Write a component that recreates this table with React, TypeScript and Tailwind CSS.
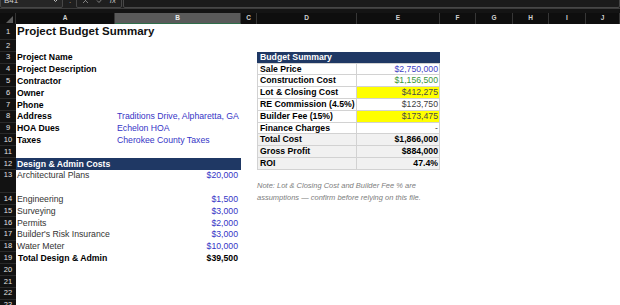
import React from "react";

const A = "w-[99px]";
const B = "w-[126px]";
const C = "w-[16px]";
const D = "w-[100px]";
const E = "w-[83px]";

const BLUE = "text-[#3535c6]";
const GRID = "border-[#d2d2d2]";

function Cell({
  w,
  className = "",
  children,
}: {
  w: string;
  className?: string;
  children?: React.ReactNode;
}) {
  return (
    <div className={`${w} shrink-0 h-full flex items-center whitespace-nowrap ${className}`}>
      {children}
    </div>
  );
}

function Row({
  n,
  h = "h-[11.8px]",
  top = false,
  children,
}: {
  n: number;
  h?: string;
  top?: boolean;
  children?: React.ReactNode;
}) {
  return (
    <div className={`flex ${h}`}>
      <div
        className={`w-[16px] shrink-0 h-full bg-[#121212] border-b border-[#2a2a2a] text-[7.5px] text-[#e2e2e2] flex justify-center ${
          top ? "items-start pt-[1px]" : "items-center"
        }`}
      >
        {n}
      </div>
      {children}
    </div>
  );
}

// two-cell row of the Budget Summary table (columns D and E)
function SumRow({
  label,
  value,
  valueClass = "text-[#404040]",
  cellBg = "",
  bold = false,
}: {
  label: string;
  value: string;
  valueClass?: string;
  cellBg?: string;
  bold?: boolean;
}) {
  return (
    <>
      <Cell w={D} className={`border-l border-r border-b ${GRID} pl-[2px] font-bold text-black ${cellBg}`}>
        {label}
      </Cell>
      <Cell
        w={E}
        className={`border-r border-b ${GRID} justify-end pr-[1px] ${bold ? "font-bold text-black" : valueClass} ${cellBg}`}
      >
        {value}
      </Cell>
    </>
  );
}

function Label({ children }: { children: React.ReactNode }) {
  return (
    <Cell w={A} className="pl-[1px] font-bold text-black">
      {children}
    </Cell>
  );
}

function CostRow({ n, label, value }: { n: number; label: string; value: string }) {
  return (
    <Row n={n}>
      <Cell w={A} className="pl-[1px] text-[#333]">
        {label}
      </Cell>
      <Cell w={B} className={`justify-end pr-[3px] ${BLUE}`}>
        {value}
      </Cell>
    </Row>
  );
}

const colHeads = [
  { l: "A", w: "w-[99px]" },
  { l: "B", w: "w-[126px]", sel: true },
  { l: "C", w: "w-[16px]" },
  { l: "D", w: "w-[100px]" },
  { l: "E", w: "w-[83px]" },
  { l: "F", w: "w-[36px]" },
  { l: "G", w: "w-[37px]" },
  { l: "H", w: "w-[36px]" },
  { l: "I", w: "w-[37px]" },
  { l: "J", w: "w-[34px]" },
];

export default function App() {
  return (
    <div className="w-[620px] h-[305px] overflow-hidden bg-white font-['Liberation_Sans',Arial,sans-serif] text-[8.7px] leading-none">
      {/* formula bar, cut at top */}
      <div className="h-[9px] overflow-hidden bg-[#1f1f1f] border-b border-[#3c3c3c]">
        <div className="flex items-center h-[15px] -mt-[7px] text-[#cfcfcf]">
          <div className="w-[63px] h-full border border-[#474747] rounded-[2px] bg-[#262626] flex items-center justify-between px-[3px] text-[8px]">
            <span>B41</span>
            <svg width="7" height="5" viewBox="0 0 7 5" fill="none">
              <path d="M1 1l2.5 2.5L6 1" stroke="#bdbdbd" strokeWidth="1" />
            </svg>
          </div>
          <span className="ml-[6px] text-[8px] text-[#aaa]">:</span>
          <div className="ml-[5px] w-[46px] h-full border border-[#474747] rounded-[2px] flex items-center justify-around px-[2px] text-[#8a8a8a]">
            <svg width="7" height="7" viewBox="0 0 7 7">
              <path d="M1 1l5 5M6 1L1 6" stroke="#8a8a8a" strokeWidth="0.9" />
            </svg>
            <svg width="8" height="7" viewBox="0 0 8 7" fill="none">
              <path d="M1 3.5l2 2L7 1" stroke="#8a8a8a" strokeWidth="0.9" />
            </svg>
            <span className="italic text-[8px] text-[#bdbdbd]">fx</span>
          </div>
          <div className="ml-[1px] flex-1 h-full border border-[#474747] rounded-[2px] bg-[#1b1b1b]" />
        </div>
      </div>
      <div className="h-[4px] bg-[#141414]" />

      {/* column headers */}
      <div className="flex h-[11px] bg-[#0e0e0e] text-[6.5px] font-bold text-[#d2d2d2]">
        <div className="w-[16px] shrink-0 h-full flex items-end justify-end pr-[2px] pb-[1px] border-r border-[#333]">
          <svg width="7" height="7" viewBox="0 0 7 7">
            <path d="M7 0L7 7L0 7Z" fill="#5e5e5e" />
          </svg>
        </div>
        {colHeads.map((c) => (
          <div
            key={c.l}
            className={`${c.w} shrink-0 h-full flex items-center justify-center border-r border-[#363636] ${
              c.sel ? "bg-[#5a5a5a] text-[#ececec] border-b border-b-[#2f6e4a]" : ""
            }`}
          >
            {c.l}
          </div>
        ))}
      </div>

      {/* sheet */}
      <Row n={1} h="h-[16px]">
        <Cell w={A} className="pl-[1px] text-[11.5px] font-bold text-[#111]">
          Project Budget Summary
        </Cell>
      </Row>
      <Row n={2} />
      <Row n={3}>
        <Label>Project Name</Label>
        <Cell w={B} />
        <Cell w={C} />
        <div className="w-[183px] shrink-0 h-full flex items-center bg-[#1f3864] pl-[3px] font-bold text-white border-b border-[#d2d2d2]">
          Budget Summary
        </div>
      </Row>
      <Row n={4}>
        <Label>Project Description</Label>
        <Cell w={B} />
        <Cell w={C} />
        <SumRow label="Sale Price" value="$2,750,000" valueClass="text-[#4040c4]" />
      </Row>
      <Row n={5}>
        <Label>Contractor</Label>
        <Cell w={B} />
        <Cell w={C} />
        <SumRow label="Construction Cost" value="$1,156,500" valueClass="text-[#3a963a]" />
      </Row>
      <Row n={6}>
        <Label>Owner</Label>
        <Cell w={B} />
        <Cell w={C} />
        <Cell w={D} className={`border-l border-r border-b ${GRID} pl-[2px] font-bold text-black`}>
          Lot &amp; Closing Cost
        </Cell>
        <Cell w={E} className={`border-r border-b ${GRID} justify-end pr-[1px] bg-[#ffff00] text-[#4a4a4a]`}>
          $412,275
        </Cell>
      </Row>
      <Row n={7}>
        <Label>Phone</Label>
        <Cell w={B} />
        <Cell w={C} />
        <SumRow label="RE Commission (4.5%)" value="$123,750" />
      </Row>
      <Row n={8}>
        <Label>Address</Label>
        <Cell w={B} className={`pl-[2px] ${BLUE}`}>
          Traditions Drive, Alpharetta, GA
        </Cell>
        <Cell w={C} />
        <Cell w={D} className={`border-l border-r border-b ${GRID} pl-[2px] font-bold text-black`}>
          Builder Fee (15%)
        </Cell>
        <Cell w={E} className={`border-r border-b ${GRID} justify-end pr-[1px] bg-[#ffff00] text-[#4a4a4a]`}>
          $173,475
        </Cell>
      </Row>
      <Row n={9}>
        <Label>HOA Dues</Label>
        <Cell w={B} className={`pl-[2px] ${BLUE}`}>
          Echelon HOA
        </Cell>
        <Cell w={C} />
        <SumRow label="Finance Charges" value="-" />
      </Row>
      <Row n={10}>
        <Label>Taxes</Label>
        <Cell w={B} className={`pl-[2px] ${BLUE}`}>
          Cherokee County Taxes
        </Cell>
        <Cell w={C} />
        <SumRow label="Total Cost" value="$1,866,000" bold cellBg="bg-[#f1f1f1]" />
      </Row>
      <Row n={11}>
        <Cell w={A} />
        <Cell w={B} />
        <Cell w={C} />
        <SumRow label="Gross Profit" value="$884,000" bold cellBg="bg-[#f1f1f1]" />
      </Row>
      <Row n={12}>
        <div className="w-[225px] shrink-0 h-full flex items-center bg-[#1f3864] pl-[1px] font-bold text-white">
          Design &amp; Admin Costs
        </div>
        <Cell w={C} />
        <SumRow label="ROI" value="47.4%" bold cellBg="bg-[#f1f1f1]" />
      </Row>
      <Row n={13} h="h-[23.6px]" top>
        <div className="w-[99px] shrink-0 h-[11.8px] flex items-center pl-[1px] text-[#333] whitespace-nowrap">
          Architectural Plans
        </div>
        <div className={`w-[126px] shrink-0 h-[11.8px] flex items-center justify-end pr-[3px] ${BLUE}`}>
          $20,000
        </div>
        <Cell w={C} />
        <div className="w-[100px] shrink-0 h-full pt-[10px] italic text-[7.5px] leading-[11.8px] text-[#7d7d7d] whitespace-nowrap">
          <div>Note: Lot &amp; Closing Cost and Builder Fee % are</div>
          <div>assumptions — confirm before relying on this file.</div>
        </div>
      </Row>
      <CostRow n={14} label="Engineering" value="$1,500" />
      <CostRow n={15} label="Surveying" value="$3,000" />
      <CostRow n={16} label="Permits" value="$2,000" />
      <CostRow n={17} label="Builder's Risk Insurance" value="$3,000" />
      <CostRow n={18} label="Water Meter" value="$10,000" />
      <Row n={19}>
        <Cell w={A} className="pl-[2px] font-bold text-black">
          Total Design &amp; Admin
        </Cell>
        <Cell w={B} className="justify-end pr-[3px] font-bold text-black">
          $39,500
        </Cell>
      </Row>
      <Row n={20} />
      <Row n={21} />
      <Row n={22} />
      <Row n={23} />
    </div>
  );
}
